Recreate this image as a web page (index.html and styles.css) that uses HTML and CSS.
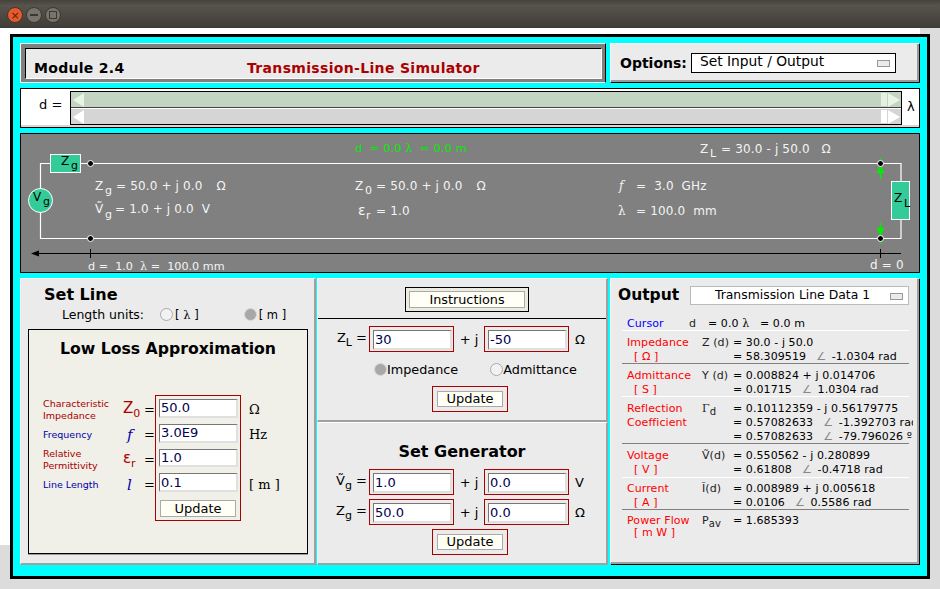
FILE: index.html
```html
<!DOCTYPE html>
<html lang="en">
<head>
  <meta charset="UTF-8" />
  <title>Module 2.4 - Transmission-Line Simulator</title>
  <link rel="stylesheet" href="styles.css">
</head>
<body>
  <!-- Window title bar -->
  <header class="titlebar">
    <span class="win-btn win-close">&#215;</span>
    <span class="win-btn"><i class="win-min"></i></span>
    <span class="win-btn"><i class="win-max"></i></span>
  </header>

  <div class="desktop">
    <main class="frame">
      <!-- Header row -->
      <section class="top-row">
        <div class="title-panel">
          <h1>Module 2.4</h1>
          <h2>Transmission-Line Simulator</h2>
        </div>
        <div class="options-panel">
          <span class="options-label">Options:</span>
          <div class="choice choice-options">Set Input / Output<i class="choice-mark"></i></div>
        </div>
      </section>

      <!-- d slider -->
      <section class="slider-panel">
        <span class="slider-label">d =</span>
        <div class="scroll-wrap">
          <div class="scroll scroll-green">
            <i class="arrow-left"></i><i class="thumb"></i><i class="arrow-right"></i>
          </div>
          <div class="scroll scroll-grey">
            <i class="arrow-left"></i><i class="thumb"></i><i class="arrow-right"></i>
          </div>
        </div>
        <span class="slider-unit">&#955;</span>
      </section>

      <!-- Line diagram -->
      <section class="diagram-panel">
        <svg class="diagram" width="898" height="138" viewBox="21 134 898 138">
          <g class="wire">
            <path d="M40.5 190V163.5H50M80 163.5H901V181M901 219V238.5H40.5V212" />
          </g>
          <path class="axis" d="M36 253.5H901M90.5 249V258M880.5 249V258" />
          <path class="axis-head" d="M31 253.5L39 250.5V256.5Z" />

          <rect class="part" x="50.5" y="154.5" width="30" height="18" />
          <rect class="part" x="891.5" y="181.5" width="18" height="38" />
          <circle class="part" cx="40.5" cy="200.5" r="12" />

          <path class="green-line" d="M880.5 158V179M880.5 223V244" />
          <path class="green-head" d="M880.5 165L876.5 173H884.5ZM880.5 236L876.5 228H884.5Z" />

          <circle class="node" cx="90.5" cy="163.5" r="3" />
          <circle class="node" cx="90.5" cy="238.5" r="3" />
          <circle class="node" cx="880.5" cy="163.5" r="3" />
          <circle class="node" cx="880.5" cy="238.5" r="3" />

          <text class="dark" x="61" y="165">Z</text><text class="dark sub" x="71" y="169">g</text>
          <text class="dark" x="33" y="201">V</text><text class="dark sub" x="43" y="205">g</text>
          <text class="dark" x="894" y="202">Z</text><text class="dark sub" x="904" y="207">L</text>

          <text class="green" x="355" y="152">d  = 0.0 <tspan class="greek">&#955;</tspan>  = 0.0 m</text>
          <text class="light" x="700" y="153">Z</text><text class="light sub" x="710" y="157">L</text>
          <text class="light" x="721" y="153">= 30.0 - j 50.0   &#937;</text>

          <text class="light" x="95" y="190">Z</text><text class="light sub" x="105" y="194">g</text>
          <text class="light" x="116" y="190">= 50.0 + j 0.0   <tspan dx="2">&#937;</tspan></text>
          <text class="light" x="95" y="213">&#7804;</text><text class="light sub" x="105" y="218">g</text>
          <text class="light" x="115" y="213">= 1.0 + j 0.0  V</text>

          <text class="light" x="355" y="190">Z</text><text class="light sub" x="365" y="194">0</text>
          <text class="light" x="376" y="190">= 50.0 + j 0.0   <tspan dx="2">&#937;</tspan></text>
          <text class="light epsilon" x="358" y="215">&#949;</text><text class="light sub" x="366" y="219">r</text>
          <text class="light" x="376" y="215">= 1.0</text>

          <text class="light ital" x="619" y="190">f</text>
          <text class="light" x="636" y="190">=  3.0  GHz</text>
          <text class="light greek" x="618" y="215">&#955;</text>
          <text class="light" x="636" y="215">= 100.0  mm</text>

          <text class="light small" x="88" y="270">d =  1.0  <tspan class="greek">&#955;</tspan> =  100.0 mm</text>
          <text class="light" x="870" y="269">d = 0</text>
        </svg>
      </section>

      <section class="bottom-row">
        <!-- Set Line -->
        <div class="panel line-panel">
          <h3 class="line-title">Set Line</h3>
          <div class="units">
            <span class="units-label">Length units:</span>
            <label class="radio-item units-one"><i class="radio"></i><span>[ <span class="greek">&#955;</span> ]</span></label>
            <label class="radio-item units-two"><i class="radio radio-on"></i><span>[ m ]</span></label>
          </div>
          <div class="loss-box">
            <h3 class="loss-title">Low Loss Approximation</h3>
            <div class="loss-body">
              <div class="loss-labels">
                <div class="loss-row"><span class="tag tag-red">Characteristic<br>Impedance</span><span class="sym sym-red">Z<sub>0</sub></span><span class="eq">=</span></div>
                <div class="loss-row"><span class="tag tag-blue">Frequency</span><span class="sym sym-blue sym-ital">f</span><span class="eq">=</span></div>
                <div class="loss-row"><span class="tag tag-red">Relative<br>Permittivity</span><span class="sym sym-red">&#949;<sub>r</sub></span><span class="eq">=</span></div>
                <div class="loss-row"><span class="tag tag-blue">Line Length</span><span class="sym sym-blue sym-ital">l</span><span class="eq">=</span></div>
              </div>
              <div class="loss-inputs">
                <input class="field" type="text" value="50.0">
                <input class="field" type="text" value="3.0E9">
                <input class="field" type="text" value="1.0">
                <input class="field" type="text" value="0.1">
                <button class="btn btn-loss">Update</button>
              </div>
              <div class="loss-units">
                <span>&#937;</span>
                <span>Hz</span>
                <span></span>
                <span>[ m ]</span>
              </div>
            </div>
          </div>
        </div>

        <!-- Load and generator -->
        <div class="mid-col">
          <div class="panel load-panel">
            <div class="instr-row">
              <div class="instr-box"><button class="btn btn-instr">Instructions</button></div>
            </div>
            <div class="value-row value-first">
              <span class="value-sym">Z<sub>L</sub> =</span>
              <div class="red-box"><input class="field field-wide" type="text" value="30"></div>
              <span class="plus-j">+ j</span>
              <div class="red-box"><input class="field field-wide" type="text" value="-50"></div>
              <span class="value-unit">&#937;</span>
            </div>
            <div class="mode-row">
              <label class="radio-item mode-one"><i class="radio radio-on"></i>Impedance</label>
              <label class="radio-item mode-two"><i class="radio"></i>Admittance</label>
            </div>
            <div class="red-box update-box"><button class="btn btn-update">Update</button></div>
          </div>
          <div class="panel gen-panel">
            <h3 class="gen-title">Set Generator</h3>
            <div class="value-row">
              <span class="value-sym">&#7804;<sub>g</sub> =</span>
              <div class="red-box"><input class="field field-wide" type="text" value="1.0"></div>
              <span class="plus-j">+ j</span>
              <div class="red-box"><input class="field field-wide" type="text" value="0.0"></div>
              <span class="value-unit">V</span>
            </div>
            <div class="value-row value-next">
              <span class="value-sym">Z<sub>g</sub> =</span>
              <div class="red-box"><input class="field field-wide" type="text" value="50.0"></div>
              <span class="plus-j">+ j</span>
              <div class="red-box"><input class="field field-wide" type="text" value="0.0"></div>
              <span class="value-unit">&#937;</span>
            </div>
            <div class="red-box update-box update-gen"><button class="btn btn-update">Update</button></div>
          </div>
        </div>

        <!-- Output -->
        <div class="panel output-panel">
          <div class="output-head">
            <h3 class="output-title">Output</h3>
            <div class="choice choice-output">Transmission Line Data 1<i class="choice-mark"></i></div>
          </div>
          <div class="out-block line-white cursor-block">
            <span class="out-name out-blue">Cursor</span>
            <span class="out-sym">d</span>
            <span class="out-val">= 0.0 <span class="greek">&#955;</span>&nbsp;&nbsp;&nbsp;= 0.0 m</span>
          </div>
          <div class="out-block line-grey">
            <span class="out-name">Impedance</span><span class="out-sym">Z (d)</span><span class="out-val">= 30.0 - j 50.0</span>
            <span class="out-name out-unit">[ &#937; ]</span><span class="out-sym"></span><span class="out-val">= 58.309519 &nbsp;<b class="ang">&#8736;</b> -1.0304 rad</span>
          </div>
          <div class="out-block line-white">
            <span class="out-name">Admittance</span><span class="out-sym">Y (d)</span><span class="out-val">= 0.008824 + j 0.014706</span>
            <span class="out-name out-unit">[ S ]</span><span class="out-sym"></span><span class="out-val">= 0.01715 &nbsp;<b class="ang">&#8736;</b> 1.0304 rad</span>
          </div>
          <div class="out-block line-grey reflect-block">
            <span class="out-name">Reflection</span><span class="out-sym out-gamma">&#915;<sub>d</sub></span><span class="out-val">= 0.10112359 - j 0.56179775</span>
            <span class="out-name">Coefficient</span><span class="out-sym"></span><span class="out-val">= 0.57082633 &nbsp;<b class="ang">&#8736;</b> -1.392703 rad</span>
            <span class="out-name"></span><span class="out-sym"></span><span class="out-val">= 0.57082633 &nbsp;<b class="ang">&#8736;</b> -79.796026 &#186;</span>
          </div>
          <div class="out-block line-white voltage-block">
            <span class="out-name">Voltage</span><span class="out-sym">&#7804;(d)</span><span class="out-val">= 0.550562 - j 0.280899</span>
            <span class="out-name out-unit">[ V ]</span><span class="out-sym"></span><span class="out-val">= 0.61808 &nbsp;<b class="ang">&#8736;</b> -0.4718 rad</span>
          </div>
          <div class="out-block line-grey current-block">
            <span class="out-name">Current</span><span class="out-sym">&#296;(d)</span><span class="out-val">= 0.008989 + j 0.005618</span>
            <span class="out-name out-unit">[ A ]</span><span class="out-sym"></span><span class="out-val">= 0.0106 &nbsp;<b class="ang">&#8736;</b> 0.5586 rad</span>
          </div>
          <div class="out-block power-block">
            <span class="out-name">Power Flow</span><span class="out-sym">P<sub>av</sub></span><span class="out-val">= 1.685393</span>
            <span class="out-name out-unit">[ m W ]</span>
          </div>
        </div>
      </section>
    </main>
  </div>
</body>
</html>
```

FILE: styles.css
```css
/* Base */
* {
  box-sizing: border-box;
  margin: 0;
  padding: 0;
  font-family: 'DejaVu Sans', sans-serif;
}

html, body {
  height: 589px;
  overflow: hidden;
}

body {
  background: #dcdcdc;
  color: #000;
  font-size: 13px;
}

.greek {
  font-family: 'DejaVu Serif', serif;
}

/* Title bar */
.titlebar {
  height: 28px;
  padding: 7px 7px 0;
  display: flex;
  gap: 3px;
  background: linear-gradient(#46423c, #57544c 20%, #3f3c37);
}

.win-btn {
  width: 16px;
  height: 16px;
  border-radius: 50%;
  background: #77746c;
  border: 1px solid #3a3833;
  display: flex;
  align-items: center;
  justify-content: center;
  color: #4a2010;
  font-size: 11px;
  line-height: 1;
}

.win-close {
  background: #e9592b;
}

.win-min {
  width: 8px;
  height: 2px;
  background: #3a3833;
}

.win-max {
  width: 8px;
  height: 8px;
  border: 1px solid #3a3833;
}

/* Page behind the applet */
.desktop {
  height: 517px;
  width: 920px;
  padding: 6px 0 0 10px;
  background: #fff;
}

.frame {
  width: 920px;
  height: 545px;
  border: 3px solid #000;
  background: #0ff;
  padding: 6px 7px 0;
  display: flex;
  flex-direction: column;
}

/* Header row */
.top-row {
  display: flex;
  gap: 4px;
  height: 40px;
}

.title-panel {
  width: 586px;
  display: flex;
  align-items: flex-end;
  padding: 0 0 3px 13px;
  background: #ebebeb;
  border: 1px solid #000;
  border-color: #fff #000 #fff #fff;
  box-shadow: inset 4px 4px 0 #808080, inset -3px -3px 0 #808080;
  position: relative;
}

.title-panel::before {
  content: "";
  position: absolute;
  inset: 4px 3px 3px 4px;
  border: 1px solid;
  border-color: #000 #fff #fff #000;
}

.title-panel h1 {
  width: 213px;
  font-size: 14px;
  font-weight: 700;
  letter-spacing: 0.3px;
  padding-bottom: 3px;
}

.title-panel h2 {
  font-size: 14px;
  font-weight: 700;
  letter-spacing: 0.33px;
  color: #aa0000;
  padding-bottom: 3px;
}

.options-panel {
  width: 310px;
  display: flex;
  align-items: center;
  padding: 0 0 0 9px;
  background: #ebebeb;
  border: 1px solid #000;
  border-color: #fff #000 #000 #fff;
  box-shadow: inset -2px -2px 0 #9a9a9a;
}

.options-label {
  width: 71px;
  font-size: 14px;
  font-weight: 700;
}

.choice {
  position: relative;
  background: #fff;
  font-size: 14px;
}

.choice-options {
  width: 205px;
  height: 20px;
  border: 1px solid #000;
  padding-left: 8px;
  line-height: 15px;
  font-size: 13.8px;
}

.choice-mark {
  position: absolute;
  right: 5px;
  top: 6px;
  width: 13px;
  height: 7px;
  background: #ebebeb;
  border: 1px solid #999;
}

/* Slider */
.slider-panel {
  height: 40px;
  margin-top: 5px;
  padding-top: 2px;
  display: flex;
  background: #fff;
  border: 1px solid #000;
  box-shadow: inset 0 -2px 0 #d8d8d8;
}

.slider-label {
  width: 49px;
  padding: 6px 0 0 18px;
  font-size: 13px;
}

.scroll-wrap {
  width: 832px;
  height: 34px;
  border: 1px solid #000;
  display: flex;
  flex-direction: column;
  gap: 1px;
}

.scroll {
  flex: 1;
  position: relative;
  display: flex;
  justify-content: space-between;
}

.scroll-green {
  background: #c4d4c2;
  border-bottom: 1px solid #444;
}

.scroll-grey {
  background: #d5d5d5;
}

.arrow-left,
.arrow-right {
  width: 0;
  height: 0;
  border-style: solid;
  border-width: 7px 0;
  border-color: transparent;
  align-self: center;
}

.arrow-left {
  border-right: 11px solid #fff;
  margin-left: 2px;
}

.arrow-right {
  border-left: 12px solid #fff;
  margin-right: 1px;
}

.scroll-green .arrow-left {
  border-right-color: #e8f4e6;
}

.scroll-green .arrow-right {
  border-left-color: #e8f4e6;
}

.thumb {
  position: absolute;
  right: 14px;
  top: 1px;
  bottom: 1px;
  width: 6px;
  background: #fff;
}

.scroll-green .thumb {
  background: #e4f0e2;
}

.slider-unit {
  padding: 8px 0 0 5px;
  font-size: 13px;
}

/* Diagram */
.diagram-panel {
  height: 140px;
  margin-top: 5px;
  width: 900px;
  background: #808080;
  border: 1px solid #000;
}

.diagram {
  display: block;
}

.wire path {
  fill: none;
  stroke: #fff;
  stroke-width: 1.2;
}

.axis {
  fill: none;
  stroke: #000;
}

.axis-head {
  fill: #000;
}

.part {
  fill: #33cc99;
  stroke: #fff;
}

.green-line {
  stroke: #00ee00;
  stroke-width: 1.5;
  fill: none;
}

.green-head {
  fill: #00ee00;
}

.node {
  fill: #000;
  stroke: #fff;
}

.diagram text {
  font-size: 12px;
  letter-spacing: 0.15px;
  white-space: pre;
}

.diagram .light {
  fill: #f4f4f4;
}

.diagram .dark {
  fill: #000;
}

.diagram .green {
  fill: #00ee00;
  font-size: 11.3px;
}

.diagram .sub {
  font-size: 11px;
}

.diagram .small {
  font-size: 11.2px;
  letter-spacing: 0;
}

.diagram .epsilon {
  font-size: 14px;
}

.diagram .ital {
  font-family: 'DejaVu Serif', serif;
  font-style: italic;
}

/* Bottom row */
.bottom-row {
  display: flex;
  margin-top: 5px;
  height: 287px;
}

.panel {
  background: #ebebeb;
  border: 1px solid;
  border-color: #fff #a0a0a0 #a0a0a0 #fff;
  border-width: 1px 2px 2px 1px;
}

h3 {
  font-weight: 700;
}

/* Set Line */
.line-panel {
  width: 296px;
  height: 287px;
  padding: 6px 7px 0;
}

.line-title {
  padding-left: 16px;
  font-size: 16px;
}

.units {
  margin-top: 2px;
  height: 17px;
  display: flex;
  align-items: center;
  font-size: 12.5px;
  padding-left: 34px;
}

.radio-item {
  display: inline-flex;
  align-items: center;
}

.radio {
  width: 13px;
  height: 13px;
  border-radius: 50%;
  border: 1px solid #aaa;
  background: #f2f2f2;
  flex: none;
}

.radio-on {
  background: #a8a8a8;
  border-color: #d8d8d8;
}

.units-one {
  margin-left: 16px;
  gap: 2px;
  font-size: 11.5px;
}

.units-two {
  margin-left: 45px;
  gap: 2px;
  font-size: 11.5px;
}

.loss-box {
  margin-top: 6px;
  width: 280px;
  height: 225px;
  background: #f0efe8;
  border: 1px solid #000;
  box-shadow: 0 1px 0 #999;
}

.loss-title {
  text-align: center;
  padding-top: 9px;
  font-size: 15.7px;
  line-height: 19px;
}

.loss-body {
  margin-top: 37px;
  display: flex;
}

.loss-labels {
  width: 126px;
  padding-top: 2px;
}

.loss-row {
  height: 25px;
  display: flex;
  align-items: center;
}

.tag {
  width: 80px;
  margin-left: 14px;
  font-size: 9.5px;
  line-height: 12px;
}

.tag-red,
.sym-red {
  color: #aa0000;
}

.tag-blue,
.sym-blue {
  color: #0000aa;
}

.sym {
  width: 21px;
  font-size: 15px;
  font-weight: 400;
}

.sym sub {
  font-size: 11px;
}

.sym-ital {
  font-family: 'DejaVu Serif', serif;
  font-style: italic;
  padding-left: 4px;
}

.eq {
  font-size: 13px;
}

.loss-inputs {
  width: 86px;
  height: 126px;
  border: 1px solid #aa0000;
  padding: 3px;
  display: flex;
  flex-direction: column;
  gap: 6px;
}

.field {
  width: 79px;
  height: 19px;
  background: #fff;
  border: 1px solid;
  border-color: #777 #e0e0e0 #e0e0e0 #777;
  border-width: 1px 2px 2px 1px;
  font-size: 13px;
  color: #000050;
  outline: none;
  padding: 0 0 0 1px;
}

.btn {
  font-size: 13px;
  background: #fffff6;
  border: 1px solid #aaa;
  color: #000;
}

.btn-loss {
  width: 76px;
  height: 17px;
  margin: 2px 0 0 1px;
  line-height: 15px;
}

.loss-units {
  padding: 7px 0 0 8px;
  font-size: 13px;
}

.loss-units span {
  display: block;
  height: 25px;
  font-family: 'DejaVu Serif', serif;
}

/* Load and generator */
.mid-col {
  width: 291px;
  margin-left: 1px;
  display: flex;
  flex-direction: column;
}

.load-panel {
  height: 144px;
}

.gen-panel {
  height: 143px;
}

.instr-row {
  height: 40px;
  padding: 8px 0 0 10px;
  border-bottom: 1px solid #000;
  display: flex;
  justify-content: center;
}

.instr-box {
  width: 124px;
  height: 25px;
  border: 1px solid #000;
  background: #ebebe0;
  padding: 3px;
}

.btn-instr {
  width: 116px;
  height: 17px;
  display: block;
  line-height: 15px;
  font-size: 12.8px;
}

.value-row {
  display: flex;
  align-items: center;
  height: 26px;
}

.value-first {
  margin-top: 7px;
}

.value-next {
  margin-top: 4px;
}

.value-sym {
  width: 51px;
  text-align: right;
  padding-right: 2px;
  font-size: 13px;
  white-space: nowrap;
}

.value-sym sub {
  font-size: 11px;
}

.red-box {
  border: 1px solid #aa0000;
  padding: 3px;
}

.value-row .red-box {
  width: 85px;
  height: 26px;
}

.field-wide {
  width: 79px;
  height: 20px;
  display: block;
  padding-bottom: 1px;
}

.plus-j {
  width: 30px;
  text-align: center;
  font-size: 13px;
}

.value-unit {
  padding-left: 6px;
  font-size: 13px;
}

.mode-row {
  margin-top: 9px;
  height: 17px;
  font-size: 12.8px;
  display: flex;
}

.mode-one {
  margin-left: 56px;
}

.mode-two {
  margin-left: 32px;
}

.update-box {
  width: 76px;
  height: 26px;
  margin: 8px auto 0;
  position: relative;
  left: 8px;
  padding: 4px;
}

.update-gen {
  margin-top: 4px;
}

.btn-update {
  width: 66px;
  height: 16px;
  display: block;
  line-height: 14px;
}

.gen-title {
  text-align: center;
  font-size: 16px;
  line-height: 19px;
  padding: 19px 0 8px;
}

/* Output */
.output-panel {
  margin-left: 2px;
  width: 309px;
  height: 286px;
  padding: 6px 0 0 0;
  overflow: hidden;
  box-shadow: 1px 1px 0 #000;
}

.output-head {
  display: flex;
  align-items: center;
  padding-left: 7px;
  gap: 9px;
  height: 20px;
}

.output-title {
  font-size: 15.5px;
  width: 63px;
}

.choice-output {
  width: 219px;
  height: 19px;
  border: 1px solid #bbb;
  font-size: 12.4px;
  text-align: center;
  padding-right: 14px;
  line-height: 15px;
}

.out-block {
  margin-left: 11px;
  width: 291px;
  height: 33px;
  padding: 5px 0 0 5px;
  display: grid;
  grid-template-columns: 75px 31px 180px;
  grid-auto-rows: 14px;
  font-size: 11px;
  letter-spacing: 0.08px;
  line-height: 14px;
  white-space: nowrap;
  overflow: hidden;
}

.cursor-block {
  margin-top: 11px;
  height: 15px;
  padding-top: 1px;
  grid-template-columns: 62px 19px 180px;
}

.line-white {
  background: linear-gradient(#fff, #fff) 0 100% / 287px 1px no-repeat;
}

.line-grey {
  background: linear-gradient(#808080, #808080) 0 100% / 287px 1px no-repeat;
}

.reflect-block {
  height: 47px;
}

.voltage-block {
  height: 34px;
}

.current-block {
  height: 32px;
  padding-top: 4px;
}

.power-block {
  padding-top: 4px;
  grid-auto-rows: 12px;
}

.out-name {
  color: #ff0000;
}

.out-blue {
  color: #0000ff;
}

.out-unit {
  padding-left: 7px;
}

.out-sym {
  color: #222;
}

.out-sym sub {
  font-size: 10px;
}

.out-gamma {
  font-family: 'DejaVu Serif', serif;
}

.ang {
  color: #888;
  font-weight: 400;
  margin: 0 2px 0 3px;
}
```
